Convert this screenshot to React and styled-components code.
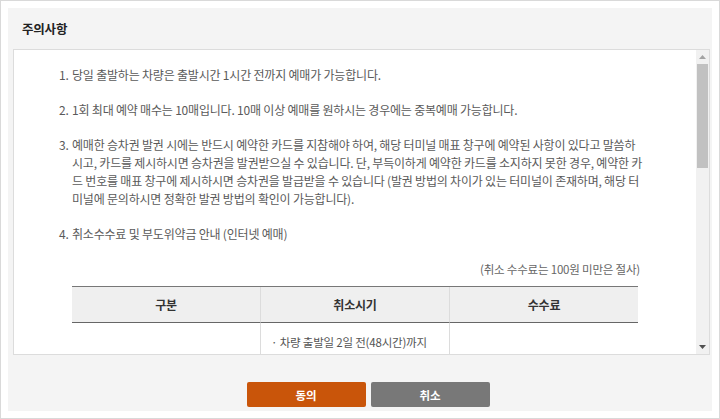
import React from "react";
import styled, { createGlobalStyle } from "styled-components";

const Global = createGlobalStyle`
  html, body { margin: 0; padding: 0; background: #fff; }
  body { font-family: "Noto Sans CJK KR", "Noto Sans", sans-serif; }
  * { box-sizing: border-box; }
`;

const Frame = styled.div`
  width: 720px;
  height: 419px;
  border: 1px solid #d9d9d9;
  padding: 7px;
  background: #fff;
`;

const Panel = styled.div`
  height: 100%;
  background: #f4f4f4;
  display: flex;
  flex-direction: column;
  padding: 0 2px 0 5px;
`;

const Header = styled.div`
  height: 41px;
  display: flex;
  align-items: center;
  padding-left: 9px;
  font-size: 12.5px;
  font-weight: 700;
  color: #222;
  letter-spacing: -0.2px;
`;

const ContentBox = styled.div`
  height: 306px;
  background: #fff;
  border: 1px solid #dcdcdc;
  display: flex;
`;

const Scroll = styled.div`
  flex: 1;
  overflow: hidden;
  padding: 16px 56px 0 45px;
`;

const Item = styled.div`
  display: grid;
  grid-template-columns: 13px 1fr;
  font-size: 12px;
  line-height: 18px;
  color: #5a5a5a;
  margin-bottom: 17px;
  white-space: nowrap;
  letter-spacing: -0.2px;
`;

const Num = styled.span``;

const Note = styled.div`
  text-align: right;
  margin-top: 17px;
  font-size: 11.5px;
  line-height: 18px;
  color: #666;
`;

const Table = styled.div`
  margin-top: 8px;
  display: grid;
  grid-template-columns: 188px 189px 1fr;
  border-top: 1px solid #777;
  margin-right: 2px;
`;

const Th = styled.div`
  height: 36px;
  display: flex;
  align-items: center;
  justify-content: center;
  background: #efefef;
  border-bottom: 1px solid #666;
  border-left: ${(p) => (p.$first ? "none" : "1px solid #dcdcdc")};
  font-size: 12px;
  font-weight: 700;
  color: #333;
`;

const Td = styled.div`
  height: 40px;
  padding: 10px 0 0 10px;
  border-left: ${(p) => (p.$first ? "none" : "1px solid #dcdcdc")};
  font-size: 11.5px;
  line-height: 18px;
  color: #555;
`;

const ScrollBar = styled.div`
  width: 13px;
  background: #f1f1f1;
  display: flex;
  flex-direction: column;
  align-items: center;
`;

const Arrow = styled.div`
  height: 14px;
  width: 100%;
  display: flex;
  align-items: center;
  justify-content: center;
`;

const Thumb = styled.div`
  width: 11px;
  height: 104px;
  background: #c1c1c1;
`;

const Track = styled.div`
  flex: 1;
`;

const Footer = styled.div`
  flex: 1;
  display: flex;
  justify-content: center;
  align-items: flex-start;
  padding: 27px 0 0 13px;
  gap: 5px;
`;

const Button = styled.button`
  width: 119px;
  height: 25px;
  border: none;
  border-radius: 2px;
  background: ${(p) => (p.$primary ? "#c9550a" : "#787878")};
  color: #fff;
  font-family: "Noto Sans CJK KR", sans-serif;
  font-size: 11.5px;
  font-weight: 700;
  padding: 0;
`;

export default function App() {
  return (
    <>
      <Global />
      <Frame>
        <Panel>
          <Header>주의사항</Header>
          <ContentBox>
            <Scroll>
              <Item>
                <Num>1.</Num>
                <span>당일 출발하는 차량은 출발시간 1시간 전까지 예매가 가능합니다.</span>
              </Item>
              <Item>
                <Num>2.</Num>
                <span>1회 최대 예약 매수는 10매입니다. 10매 이상 예매를 원하시는 경우에는 중복예매 가능합니다.</span>
              </Item>
              <Item>
                <Num>3.</Num>
                <span>
                  예매한 승차권 발권 시에는 반드시 예약한 카드를 지참해야 하여, 해당 터미널 매표 창구에 예약된 사항이 있다고 말씀하
                  <br />
                  시고, 카드를 제시하시면 승차권을 발권받으실 수 있습니다. 단, 부득이하게 예약한 카드를 소지하지 못한 경우, 예약한 카
                  <br />
                  드 번호를 매표 창구에 제시하시면 승차권을 발급받을 수 있습니다 (발권 방법의 차이가 있는 터미널이 존재하며, 해당 터
                  <br />
                  미널에 문의하시면 정확한 발권 방법의 확인이 가능합니다).
                </span>
              </Item>
              <Item>
                <Num>4.</Num>
                <div>
                  <span>취소수수료 및 부도위약금 안내 (인터넷 예매)</span>
                  <Note>(취소 수수료는 100원 미만은 절사)</Note>
                  <Table>
                    <Th $first>구분</Th>
                    <Th>취소시기</Th>
                    <Th>수수료</Th>
                    <Td $first></Td>
                    <Td>· 차량 출발일 2일 전(48시간)까지</Td>
                    <Td></Td>
                  </Table>
                </div>
              </Item>
            </Scroll>
            <ScrollBar>
              <Arrow>
                <svg width="7" height="4" viewBox="0 0 7 4">
                  <path d="M0 4 L3.5 0 L7 4 Z" fill="#a3a3a3" />
                </svg>
              </Arrow>
              <Thumb />
              <Track />
              <Arrow>
                <svg width="7" height="4" viewBox="0 0 7 4">
                  <path d="M0 0 L7 0 L3.5 4 Z" fill="#505050" />
                </svg>
              </Arrow>
            </ScrollBar>
          </ContentBox>
          <Footer>
            <Button $primary>동의</Button>
            <Button>취소</Button>
          </Footer>
        </Panel>
      </Frame>
    </>
  );
}
